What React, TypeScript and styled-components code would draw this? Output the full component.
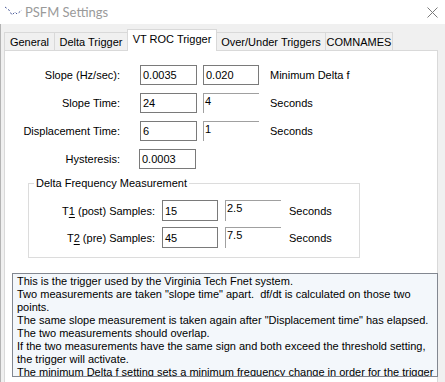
import React from 'react'
import styled, { createGlobalStyle, css } from 'styled-components'

const GlobalStyle = createGlobalStyle`
  html, body {
    margin: 0;
    padding: 0;
    background: #ffffff;
  }
  body {
    font-family: 'Liberation Sans', Arial, sans-serif;
    font-size: 11px;
    color: #000;
  }
`

const Window = styled.div`
  width: 445px;
  height: 382px;
  overflow: hidden;
  display: flex;
  flex-direction: column;
  background: #f0f0f0;
`

const TitleBar = styled.div`
  height: 24px;
  flex: 0 0 24px;
  background: #ffffff;
  display: flex;
  align-items: center;
  padding-left: 4px;
  padding-right: 7px;
`

const Title = styled.span`
  margin-left: 2px;
  font-family: Lato, 'Liberation Sans', sans-serif;
  font-size: 13px;
  color: #9a9a9a;
`

const CloseButton = styled.div`
  margin-left: auto;
  width: 11px;
  height: 11px;
  display: flex;
`

const Body = styled.div`
  flex: 1;
  display: flex;
  flex-direction: column;
  padding: 6px 7px 0 3px;
  border-left: 1px solid #b4b4b4;
  min-height: 0;
`

const TabStrip = styled.div`
  display: flex;
  align-items: flex-end;
  height: 20px;
  padding-left: 1px;
  position: relative;
  z-index: 1;
`

const Tab = styled.div`
  width: ${({ $w }) => $w}px;
  height: 18px;
  box-sizing: border-box;
  border: 1px solid #d9d9d9;
  border-bottom: none;
  margin-left: -1px;
  background: #f0f0f0;
  display: flex;
  align-items: center;
  justify-content: center;
  white-space: nowrap;
  line-height: 14px;

  ${({ $active }) =>
    $active &&
    css`
      height: 22px;
      margin-bottom: -1px;
      background: #ffffff;
      padding-bottom: 4px;
    `}
`

const Panel = styled.div`
  flex: 1;
  background: #ffffff;
  border: 1px solid #d9d9d9;
  border-bottom: none;
  padding: 14px 0 0 0;
  display: flex;
  flex-direction: column;
  min-height: 0;
`

const Form = styled.div`
  display: flex;
  flex-direction: column;
  gap: 8px;
`

const Row = styled.div`
  display: flex;
  align-items: center;
  height: ${({ $h }) => $h || 20}px;
`

const Label = styled.div`
  width: ${({ $w }) => $w}px;
  text-align: right;
  white-space: nowrap;

  u {
    text-decoration: underline;
    text-underline-offset: 2px;
  }
`

const Field = styled.div`
  box-sizing: border-box;
  width: ${({ $w }) => $w || 57}px;
  height: 100%;
  margin-left: ${({ $ml }) => $ml}px;
  border: 1px solid #7a7a7a;
  background: #ffffff;
  padding-left: 2px;
  display: flex;
  align-items: center;
`

const ReadOnlyField = styled.div`
  box-sizing: border-box;
  width: ${({ $w }) => $w || 56}px;
  height: 100%;
  margin-left: ${({ $ml }) => $ml}px;
  border-top: 1px solid #a0a0a0;
  border-left: 1px solid #a0a0a0;
  padding-left: 1px;
  line-height: 15px;
`

const Unit = styled.div`
  margin-left: ${({ $ml }) => $ml}px;
  white-space: nowrap;
`

const GroupBox = styled.fieldset`
  box-sizing: border-box;
  width: 332px;
  margin: 6px 0 0 23px;
  padding: 9px 0 9px 0;
  border: 1px solid #dcdcdc;
  display: flex;
  flex-direction: column;
  gap: 6px;
`

const Legend = styled.legend`
  margin-left: 5px;
  padding: 0 2px;
  line-height: 16px;
`

const InfoBox = styled.div`
  box-sizing: border-box;
  margin: 15px -1px 0 7px;
  height: 104px;
  flex: 0 0 104px;
  border: 1px solid #828790;
  background: #f3f7fb;
  padding: 1px 4px 0 4px;
  line-height: 13px;
  overflow: hidden;
`

const Line = styled.div`
  white-space: pre;
`

const AppIcon = () => (
  <svg width="19" height="12" viewBox="0 0 19 12">
    <polyline
      points="1,1 5,4 8,9 11,6 13,8 18,4"
      fill="none"
      stroke="#4a5a9a"
      strokeWidth="1"
      strokeDasharray="2 2"
    />
  </svg>
)

const CloseIcon = () => (
  <svg width="11" height="11" viewBox="0 0 11 11">
    <path d="M0.5 0.5 L10.5 10.5 M10.5 0.5 L0.5 10.5" stroke="#7a7a7a" strokeWidth="1" />
  </svg>
)

const tabs = [
  { label: 'General', w: 51 },
  { label: 'Delta Trigger', w: 74 },
  { label: 'VT ROC Trigger', w: 90, active: true },
  { label: 'Over/Under Triggers', w: 110 },
  { label: 'COMNAMES', w: 68 },
]

const infoLines = [
  'This is the trigger used by the Virginia Tech Fnet system.',
  'Two measurements are taken "slope time" apart.  df/dt is calculated on those two',
  'points.',
  'The same slope measurement is taken again after "Displacement time" has elapsed.',
  'The two measurements should overlap.',
  'If the two measurements have the same sign and both exceed the threshold setting,',
  'the trigger will activate.',
  'The minimum Delta f setting sets a minimum frequency change in order for the trigger',
  'to activate.',
]

const App = () => {
  return (
    <>
      <GlobalStyle />
      <Window>
        <TitleBar>
          <AppIcon />
          <Title>PSFM Settings</Title>
          <CloseButton>
            <CloseIcon />
          </CloseButton>
        </TitleBar>

        <Body>
          <TabStrip>
            {tabs.map(({ label, w, active }) => (
              <Tab key={label} $w={w} $active={active}>
                {label}
              </Tab>
            ))}
          </TabStrip>

          <Panel>
            <Form>
              <Row>
                <Label $w={115}>Slope (Hz/sec):</Label>
                <Field $ml={20}>0.0035</Field>
                <Field $ml={6} $w={56}>0.020</Field>
                <Unit $ml={11}>Minimum Delta f</Unit>
              </Row>
              <Row>
                <Label $w={115}>Slope Time:</Label>
                <Field $ml={20}>24</Field>
                <ReadOnlyField $ml={6}>4</ReadOnlyField>
                <Unit $ml={11}>Seconds</Unit>
              </Row>
              <Row>
                <Label $w={115}>Displacement Time:</Label>
                <Field $ml={20}>6</Field>
                <ReadOnlyField $ml={6}>1</ReadOnlyField>
                <Unit $ml={11}>Seconds</Unit>
              </Row>
              <Row>
                <Label $w={115}>Hysteresis:</Label>
                <Field $ml={19}>0.0003</Field>
              </Row>
            </Form>

            <GroupBox>
              <Legend>Delta Frequency Measurement</Legend>
              <Row $h={21}>
                <Label $w={126}>
                  T<u>1</u> (post) Samples:
                </Label>
                <Field $ml={7} $w={56}>15</Field>
                <ReadOnlyField $ml={7}>2.5</ReadOnlyField>
                <Unit $ml={8}>Seconds</Unit>
              </Row>
              <Row $h={21}>
                <Label $w={126}>
                  T<u>2</u> (pre) Samples:
                </Label>
                <Field $ml={7} $w={56}>45</Field>
                <ReadOnlyField $ml={7}>7.5</ReadOnlyField>
                <Unit $ml={8}>Seconds</Unit>
              </Row>
            </GroupBox>

            <InfoBox>
              {infoLines.map((line, i) => (
                <Line key={i}>{line}</Line>
              ))}
            </InfoBox>
          </Panel>
        </Body>
      </Window>
    </>
  )
}

export default App
